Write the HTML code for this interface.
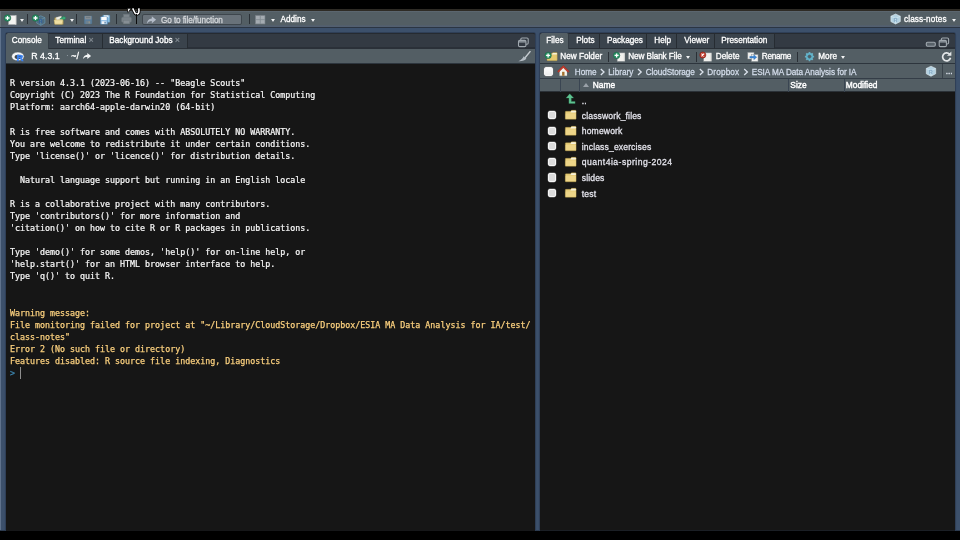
<!DOCTYPE html>
<html><head><meta charset="utf-8"><title>RStudio</title>
<style>
*{box-sizing:border-box;margin:0;padding:0}
html,body{width:960px;height:540px;overflow:hidden;background:#000}
body{position:relative;font-family:"Liberation Sans","DejaVu Sans",sans-serif;font-size:8.2px;color:#fff}
.abs{position:absolute}
svg{position:absolute;overflow:visible}
#wrap{left:-20px;top:-20px;width:1000px;height:580px;background:#000;filter:blur(0.4px)}
#app{left:20px;top:29px;width:960px;height:521.800px;background:#3c506b;clip-path:inset(-3px 0 0 0)}
#topstrip{left:0;top:0;width:960px;height:3.200px;background:linear-gradient(#2e2b25 0,#2e2b25 2.100px,#5c6770 2.100px,#58636b 3.200px)}
#maintb{left:0;top:0;width:960px;height:19px;background:linear-gradient(#535e64 0,#535e64 15.500px,#525f70 17px,#525f70 18px);border-bottom:1px solid #2b3543}
.pane{top:24px;height:498px;background:#161616;overflow:hidden}
#left{left:5.800px;width:528.900px;border-radius:2px 2px 0 0;box-shadow:0 0 0 1.100px #2f3f57}
#right{left:540.300px;width:414.900px;border-radius:2px 2px 0 0;box-shadow:0 0 0 1.100px #2f3f57}
.tabrow{left:0;top:0;right:0;height:16px;background:linear-gradient(#262b31 0,#262b31 1px,#333a43 1px,#333a43 14.500px,#2a3038 14.500px)}
.tab{top:1px;height:14.5px;line-height:13.600px;color:#fff;background:#3a434c;border-right:1px solid #262c32;border-bottom:1px solid #2a3037;white-space:nowrap;-webkit-text-stroke:0.3px #fff}
.tab.sel{background:#535e64;top:0;height:16px;line-height:15.600px;border-radius:2px 2px 0 0;border-right:1px solid #333b43;border-bottom:0}
.tab .x{color:#858d94;-webkit-text-stroke:0.2px #858d94;font-size:9px}
.tb2{left:0;right:0;top:15.5px;height:15.5px;background:#535e64;border-bottom:1px solid #2d353d}
.t{display:inline-block;transform:scaleY(1.1);transform-origin:0 77%}
.lbl.dn{transform-origin:0 27%}
.lbl{transform:scaleY(1.1);transform-origin:0 77%;white-space:nowrap;line-height:10px;color:#fff;-webkit-text-stroke:0.3px #fff}
.sep{width:1px;background:#2a3036;top:5px;height:10px}
.dd{width:0;height:0;margin-left:0.200px;border-left:2.200px solid transparent;border-right:2.200px solid transparent;border-top:3.300px solid #f2f4f5;filter:drop-shadow(0 0 0.4px #2e363c)}
#console{left:0;top:31px;right:0;bottom:0;background:#161616;font-family:"DejaVu Sans Mono","Liberation Mono",monospace;font-size:8.32px;line-height:12.08px;color:#f8f8f8;white-space:pre;-webkit-text-stroke:0.22px #f8f8f8}
#console .w{color:#fbd07e;-webkit-text-stroke:0.25px #fbd07e}
.bc{left:0;right:0;top:31px;height:15px;background:#535e64;border-bottom:1px solid #343d47}
.bc .lbl{color:#d3dcea;-webkit-text-stroke:0.25px #d3dcea;top:3.600px}
.hdr{left:0;right:0;top:46px;height:13px;background:#535e64;border-bottom:1px solid #2b3137}
.hdr .lbl{top:1.200px;-webkit-text-stroke:0.4px #fff;font-size:8.400px}
.hdr .sep{top:0;height:13px;background:#3a4552}
.cb{width:8.200px;height:8.200px;border-radius:2px;background:#dcdcdc;border:1.300px solid #f6f6f6;box-shadow:0 0 0 0.4px #777}
.row .lbl{color:#e6e6ee;-webkit-text-stroke:0.25px #e6e6ee;font-size:8.6px;letter-spacing:0.13px}
</style></head><body>
<div id="wrap" class="abs"><div id="app" class="abs">
 <div id="maintb" class="abs">
  <div id="topstrip" class="abs"></div>
  <div class="abs" style="left:142px;top:4.700px;width:100px;height:11.300px;background:#69727a;border:1px solid #3e464d;border-radius:2px"></div>
  
  <svg width="960" height="19" viewBox="0 0 960 19" style="left:0;top:0">
   <!-- new file -->
   <rect x="8.400" y="6.300" width="7.900" height="9.400" fill="#f4f4f2" stroke="#8d9498" stroke-width="0.5"/>
   <rect x="15.100" y="6.700" width="1" height="8.700" fill="#e4e4e1"/>
   <circle cx="7.500" cy="9" r="3.300" fill="#2b9467" stroke="#1b6445" stroke-width="0.6"/>
   <path d="M5.500 9h4" stroke="#fff" stroke-width="1.700"/><path d="M7.500 7v4" stroke="#fff" stroke-width="1.200"/>
   <!-- new project -->
   <path d="M40.800 6.800l4.100 1.900v5.400l-4.100 2.200l-4.100-2.200V8.700z" fill="#47789a" fill-opacity="0.5" stroke="#6a9db8" stroke-width="0.6"/>
   <path d="M36.700 8.700l4.100 1.900l4.100-1.900M40.800 10.600v5.700" stroke="#74a6c0" stroke-width="0.5" fill="none"/>
   <text x="38.800" y="14.200" font-family="Liberation Sans,sans-serif" font-weight="bold" font-size="5.200" fill="#2f5f9e">R</text>
   <circle cx="35.500" cy="9" r="3.300" fill="#2b9467" stroke="#1b6445" stroke-width="0.6"/>
   <path d="M33.500 9h4" stroke="#fff" stroke-width="1.700"/><path d="M35.500 7v4" stroke="#fff" stroke-width="1.200"/>
   <!-- open folder -->
   <path d="M54.800 8.800h2.800l0.900 0.900h4.700v5.500h-8.400z" fill="#d9c27a" stroke="#a08a45" stroke-width="0.4"/>
   <path d="M56 8.400l5.200-1.300l0.900 3.200l-5.600 1z" fill="#f3f1e6" stroke="#b9b9b2" stroke-width="0.3"/>
   <path d="M54 10.900h9l-0.800 4.300h-7.400z" fill="#efdfa2" stroke="#b5a05a" stroke-width="0.4"/>
   <path d="M59.800 10c0.900-1.300 2.100-1.700 3.400-1.700v-1.400l3 2.200l-3 2.200v-1.400c-1.200 0-2.300 0-3.400 0.100z" fill="#3fae7a" stroke="#1f7a52" stroke-width="0.4"/>
   <!-- save (disabled) -->
   <g opacity="0.62">
    <rect x="84.300" y="6.900" width="7.600" height="8" rx="0.600" fill="#5f93c0" stroke="#4f7da3" stroke-width="0.4"/>
    <rect x="84.900" y="7" width="6.400" height="3.400" fill="#a4abb1"/>
    <rect x="86" y="7.900" width="4.200" height="0.800" fill="#7d858b"/>
    <rect x="85.800" y="11.800" width="4.600" height="3" fill="#7f97aa"/>
    <rect x="88.600" y="12.400" width="1.200" height="1.900" fill="#c5b9a4"/>
   </g>
   <!-- save all -->
   <rect x="102.800" y="6.200" width="7" height="7" rx="0.500" fill="#8cc4e8" stroke="#5b8db8" stroke-width="0.4"/>
   <rect x="104" y="6.400" width="4.400" height="2.400" fill="#f4f7fa"/>
   <rect x="100.400" y="7.800" width="7.200" height="7.400" rx="0.500" fill="#7fb3df" stroke="#4f82ae" stroke-width="0.4"/>
   <rect x="101.300" y="8" width="5.400" height="3.200" fill="#fafbfc"/>
   <rect x="101.600" y="12.200" width="4.800" height="2.800" fill="#eef1f4"/>
   <rect x="104.500" y="12.700" width="1.200" height="1.900" fill="#3f74a3"/>
   <!-- printer (disabled) -->
   <g opacity="0.5">
    <rect x="123.600" y="5.300" width="5.800" height="3.400" fill="#a9b0b6" stroke="#8a9197" stroke-width="0.4"/>
    <rect x="121.600" y="8.200" width="9.800" height="5" rx="1.200" fill="#a2a9af" stroke="#868d93" stroke-width="0.4"/>
    <rect x="123.400" y="11.600" width="6.200" height="3.200" fill="#b9bfc4" stroke="#8a9197" stroke-width="0.4"/>
   </g>
   <!-- cursor fragment -->
   <path d="M127.600 -0.700h3.400l-2.400 3.900h-1z" fill="#fff" stroke="#000" stroke-width="0.8"/>
   <path d="M132.700 -0.600l1.500 3.100c0.600 1.700 1.400 2.600 2.500 2.600c1.500 0 2.300-1.500 2.300-3.300c0-0.900-0.100-1.600-0.400-2.400" fill="none" stroke="#000" stroke-width="3.200"/>
   <path d="M132.700 -0.600l1.500 3.100c0.600 1.700 1.400 2.600 2.500 2.600c1.500 0 2.300-1.500 2.300-3.300c0-0.900-0.100-1.600-0.400-2.400" fill="none" stroke="#fff" stroke-width="1.600"/>
   <!-- goto arrow -->
   <path d="M146.800 15c0.300-3.400 2.100-5.200 5-5.400v-2.300l4.300 3.500l-4.300 3.500v-2.300c-2.200-0.100-3.800 0.900-5 3z" fill="#b4bcc8"/>
   <!-- grid -->
   <rect x="255.200" y="6.200" width="10" height="9" fill="#838b92"/>
   <rect x="256" y="7" width="3.800" height="3.300" fill="#a4abb1"/><rect x="260.700" y="7" width="3.800" height="3.300" fill="#a4abb1"/>
   <rect x="256" y="11.100" width="3.800" height="3.300" fill="#a4abb1"/><rect x="260.700" y="11.100" width="3.800" height="3.300" fill="#a4abb1"/>
   <!-- project cube -->
   <path d="M895.600 5l4.700 2.200v5.400l-4.700 2.400l-4.700-2.400V7.200z" fill="#b4d2e2" stroke="#e3eef4" stroke-width="0.6"/>
   <path d="M890.900 7.200l4.700 2.200l4.700-2.200M895.600 9.400v5.600" stroke="#dceef6" stroke-width="0.5" fill="none"/>
   <text x="893.400" y="12.800" font-family="Liberation Sans,sans-serif" font-weight="bold" font-size="5.600" fill="#86abc6">R</text>
  </svg>

  <span class="lbl dn abs" style="left:161px;top:6.500px;color:#d5d8db;-webkit-text-stroke:0.25px #d5d8db;letter-spacing:-0.100px">Go to file/function</span>
  <span class="lbl dn abs" style="left:280.5px;top:6.400px">Addins</span>
  <span class="lbl dn abs" style="left:904px;top:6.400px;letter-spacing:0.120px">class-notes</span>
  <div class="sep abs" style="left:27px"></div>
  <div class="sep abs" style="left:48.5px"></div>
  <div class="sep abs" style="left:76px"></div>
  <div class="sep abs" style="left:115.5px"></div>
  <div class="sep abs" style="left:136px;background:#0c0c0c"></div>
  <div class="sep abs" style="left:248.5px"></div>
  <div class="dd abs" style="left:20px;top:9.5px"></div>
  <div class="dd abs" style="left:69.5px;top:9.5px"></div>
  <div class="dd abs" style="left:270.5px;top:9.5px"></div>
  <div class="dd abs" style="left:311px;top:9.5px"></div>
  <div class="dd abs" style="left:951.5px;top:9.5px"></div>
 </div>

 <div id="left" class="pane abs">
  <div class="tabrow abs">
   <div class="tab sel abs" style="left:0;width:43px;padding-left:6px"><span class="t">Console</span></div>
   <div class="tab abs" style="left:43px;width:54.5px;padding-left:6.5px"><span class="t">Terminal</span> <span class="x">×</span></div>
   <div class="tab abs" style="left:97.5px;width:84.5px;padding-left:6px"><span class="t">Background Jobs</span> <span class="x">×</span></div>
   
  </div>
  <div class="tb2 abs">
   <span class="lbl abs" style="left:25.5px;top:2.400px;font-size:8.8px">R 4.3.1</span>
   <span class="lbl abs" style="left:60.300px;top:2.400px;color:#9aa3ab;-webkit-text-stroke:0">·</span>
   <span class="lbl abs" style="left:65.5px;top:2.400px;font-size:8.8px">~/</span>
   
  </div>
<svg width="529" height="40" viewBox="0 0 529 40" style="left:0;top:0">
   <!-- window icon -->
   <rect x="514.800" y="5" width="7.400" height="6.200" rx="1.200" fill="none" stroke="#a0a8af" stroke-width="1.100"/>
   <rect x="512.500" y="7.400" width="7.400" height="6.200" rx="1.200" fill="#333a43" stroke="#a0a8af" stroke-width="1.100"/>
   <path d="M512.700 8.800h7" stroke="#a0a8af" stroke-width="1.300"/>
   <!-- R logo -->
   <ellipse cx="11.850" cy="23.450" rx="6.250" ry="4.350" fill="#f4f5f6" stroke="#485259" stroke-width="0.5"/>
   <ellipse cx="12.300" cy="23.900" rx="3.700" ry="2.100" fill="#3f484e"/>
   <text x="10.500" y="28.400" font-family="Liberation Sans,sans-serif" font-weight="bold" font-size="9.600" fill="#3a82f2" stroke="#3a82f2" stroke-width="0.5">R</text>
   <!-- arrow -->
   <path d="M77 26.200c0.300-2.900 1.800-4.300 4.300-4.500v-1.800l3.800 3l-3.800 3v-1.800c-1.900-0.100-3.300 0.500-4.300 2.100z" fill="#f2f4f5"/>
   <!-- broom -->
   <path d="M523.900 17.700l1.100 0.900l-5.400 6.600l-1.100-0.900z" fill="#c6ccd1"/>
   <path d="M517.600 23.300l2.800 2.300c-1.400 1.900-4 2.800-8 2.600c2.800-1.200 4.500-2.800 5.200-4.900z" fill="#b4bcc3"/>
  </svg>
<div id="console" class="abs"><div class="abs" style="left:4.2px;top:13.200px">R version 4.3.1 (2023-06-16) -- "Beagle Scouts"
Copyright (C) 2023 The R Foundation for Statistical Computing
Platform: aarch64-apple-darwin20 (64-bit)

R is free software and comes with ABSOLUTELY NO WARRANTY.
You are welcome to redistribute it under certain conditions.
Type 'license()' or 'licence()' for distribution details.

  Natural language support but running in an English locale

R is a collaborative project with many contributors.
Type 'contributors()' for more information and
'citation()' on how to cite R or R packages in publications.

Type 'demo()' for some demos, 'help()' for on-line help, or
'help.start()' for an HTML browser interface to help.
Type 'q()' to quit R.


<span class="w">Warning message:
File monitoring failed for project at "~/Library/CloudStorage/Dropbox/ESIA MA Data Analysis for IA/test/
class-notes"
Error 2 (No such file or directory)
Features disabled: R source file indexing, Diagnostics</span>
<span style="color:#3d86b0;-webkit-text-stroke:0.2px #3d86b0">&gt;</span></div><div class="abs" style="left:13.900px;top:302.500px;width:1.200px;height:12.200px;background:#8d8d8d"></div></div>
 </div>

 <div id="right" class="pane abs">
  <div class="tabrow abs">
   <div class="tab sel abs" style="left:0;width:29px;padding-left:6px"><span class="t">Files</span></div>
   <div class="tab abs" style="left:29px;width:31px;padding-left:7px"><span class="t">Plots</span></div>
   <div class="tab abs" style="left:60px;width:47px;padding-left:6.700px"><span class="t">Packages</span></div>
   <div class="tab abs" style="left:107px;width:30px;padding-left:7px"><span class="t">Help</span></div>
   <div class="tab abs" style="left:137px;width:38px;padding-left:7px"><span class="t">Viewer</span></div>
   <div class="tab abs" style="left:175px;width:60px;padding-left:6px"><span class="t">Presentation</span></div>
   
  </div>
  <div class="tb2 abs">
   <span class="lbl dn abs" style="left:20px;top:3.800px">New Folder</span>
   <div class="sep abs" style="left:68px;top:3px"></div>
   <span class="lbl dn abs" style="left:88px;top:3.800px;letter-spacing:-0.090px">New Blank File</span>
   <div class="dd abs" style="left:145.5px;top:7px"></div>
   <div class="sep abs" style="left:156px;top:3px"></div>
   <span class="lbl dn abs" style="left:175.5px;top:3.800px">Delete</span>
   <span class="lbl dn abs" style="left:221.5px;top:3.800px;letter-spacing:-0.300px">Rename</span>
   <div class="sep abs" style="left:257px;top:3px"></div>
   <span class="lbl dn abs" style="left:278px;top:3.800px">More</span>
   <div class="dd abs" style="left:301px;top:7px"></div>
   
  </div>
  <div class="bc abs">
   <div class="cb abs" style="left:3.800px;top:2.600px;width:9.400px;height:9.400px;background:linear-gradient(#fdfdfd,#ececec)"></div>
   <span class="lbl abs" style="left:34.5px">Home</span>
   <span class="lbl abs" style="left:68px">Library</span>
   <span class="lbl abs" style="left:105.5px;letter-spacing:-0.100px">CloudStorage</span>
   <span class="lbl abs" style="left:167px;letter-spacing:0.150px">Dropbox</span>
   <span class="lbl abs" style="left:211.5px;letter-spacing:-0.050px">ESIA MA Data Analysis for IA</span>
   <div class="sep abs" style="left:401.5px;top:0;height:14px;background:#39424a"></div>
   <span class="lbl abs" style="left:405.5px;top:2.500px;color:#fff">...</span>
   
  </div>
  <div class="hdr abs">
   <div class="sep abs" style="left:20px"></div>
   <div class="sep abs" style="left:39px"></div>
   <div class="sep abs" style="left:248px"></div>
   <div class="sep abs" style="left:304px"></div>
   <div class="abs" style="left:43px;top:4px;width:0;height:0;border-left:3px solid transparent;border-right:3px solid transparent;border-bottom:4.500px solid #9aa1a8"></div>
   <span class="lbl abs" style="left:52.5px">Name</span>
   <span class="lbl abs" style="left:250px">Size</span>
   <span class="lbl abs" style="left:305.5px">Modified</span>
  </div>
  <div id="files" class="abs" style="left:0;top:59px;right:0;bottom:0">
   <div class="row abs" style="top:0"><span class="lbl abs" style="left:41.5px;top:4px">..</span></div>
   <div class="row abs" style="top:15.6px"><div class="cb abs" style="left:8px;top:3.400px"></div><span class="lbl abs" style="left:41.5px;top:3px">classwork_files</span></div>
   <div class="row abs" style="top:31.2px"><div class="cb abs" style="left:8px;top:3.400px"></div><span class="lbl abs" style="left:41.5px;top:3px">homework</span></div>
   <div class="row abs" style="top:46.8px"><div class="cb abs" style="left:8px;top:3.400px"></div><span class="lbl abs" style="left:41.5px;top:3px">inclass_exercises</span></div>
   <div class="row abs" style="top:62.4px"><div class="cb abs" style="left:8px;top:3.400px"></div><span class="lbl abs" style="left:41.5px;top:3px;letter-spacing:0.480px">quant4ia-spring-2024</span></div>
   <div class="row abs" style="top:78px"><div class="cb abs" style="left:8px;top:3.400px"></div><span class="lbl abs" style="left:41.5px;top:3px">slides</span></div>
   <div class="row abs" style="top:93.6px"><div class="cb abs" style="left:8px;top:3.400px"></div><span class="lbl abs" style="left:41.5px;top:3px">test</span></div>
   
  </div>
<svg width="415" height="200" viewBox="0 0 415 200" style="left:0;top:0">
   <!-- min / max -->
   <rect x="386.300" y="9.300" width="9" height="4" rx="1.200" fill="#59626a" stroke="#a0a8af" stroke-width="1.100"/>
   <rect x="401.400" y="5" width="7.200" height="6" rx="1.200" fill="none" stroke="#a0a8af" stroke-width="1.100"/>
   <rect x="399.200" y="7.400" width="7.200" height="6.200" rx="1.200" fill="#333a43" stroke="#a0a8af" stroke-width="1.100"/>
   <path d="M399.400 8.800h6.800" stroke="#a0a8af" stroke-width="1.300"/>
   <!-- new folder -->
   <path d="M7 21.200q0-0.600 0.600-0.600h4.200l1.200-1.100h3.600q0.600 0 0.600 0.600v7q0 0.600-0.600 0.600h-9q-0.600 0-0.600-0.600z" fill="#e4c96f" stroke="#a98f3c" stroke-width="0.4"/>
   <path d="M12.800 19.900h3.700q0.400 0 0.400 0.400v1.200h-5z" fill="#f6f1dc"/>
   <circle cx="8.1" cy="22.4" r="3.2" fill="#2b9467" stroke="#1b6445" stroke-width="0.6"/><path d="M6.100 22.400h4" stroke="#fff" stroke-width="1.400"/><path d="M8.100 20.400v4" stroke="#fff" stroke-width="1.300"/>
   <!-- new blank file -->
   <rect x="77.200" y="19.900" width="7.600" height="8.400" fill="#f1f1ee" stroke="#8d9498" stroke-width="0.5"/>
   <rect x="83.600" y="20.200" width="1" height="7.800" fill="#e2e2df"/>
   <circle cx="76.6" cy="22.4" r="3.2" fill="#2b9467" stroke="#1b6445" stroke-width="0.6"/><path d="M74.600 22.400h4" stroke="#fff" stroke-width="1.400"/><path d="M76.600 20.400v4" stroke="#fff" stroke-width="1.300"/>
   <!-- delete -->
   <rect x="163.700" y="19.900" width="7.800" height="8.400" fill="#f1f1ee" stroke="#8d9498" stroke-width="0.5"/>
   <rect x="170.300" y="20.200" width="1" height="7.800" fill="#e2e2df"/>
   <circle cx="162.800" cy="22" r="3.100" fill="#c0392b" stroke="#7e1f15" stroke-width="0.6"/>
   <path d="M161.500 20.700l2.600 2.600M164.100 20.700l-2.600 2.600" stroke="#fff" stroke-width="1.100"/>
   <!-- rename -->
   <rect x="207.800" y="19.400" width="6.200" height="6.600" fill="#f1f1ee" stroke="#8d9498" stroke-width="0.5"/>
   <rect x="211.600" y="21.600" width="6.400" height="6.800" fill="#f4f4f2" stroke="#8d9498" stroke-width="0.5"/>
   <path d="M209.800 23.300h4v-1.600l3 2.500l-3 2.500v-1.600h-4z" fill="#3b86d6" stroke="#2a62a0" stroke-width="0.3"/>
   <!-- gear -->
   <g transform="translate(269.500,23.600)">
    <g fill="#6aafc2" transform="scale(0.92)">
     <rect x="-1" y="-5" width="2" height="10" rx="0.400"/>
     <rect x="-1" y="-5" width="2" height="10" rx="0.400" transform="rotate(45)"/>
     <rect x="-1" y="-5" width="2" height="10" rx="0.400" transform="rotate(90)"/>
     <rect x="-1" y="-5" width="2" height="10" rx="0.400" transform="rotate(135)"/>
    </g>
    <circle r="3.500" fill="#63b4cc"/><circle r="1.800" fill="#535e64" stroke="#3f8198" stroke-width="0.4"/>
   </g>
   <!-- refresh -->
   <path d="M409.600 21.200a4 4 0 1 0 0.900 3.600" fill="none" stroke="#e3e6e8" stroke-width="1.700"/>
   <path d="M411.400 18.400v4.400h-4.400z" fill="#e3e6e8"/>
   <!-- home -->
   <path d="M19.600 37.400l3.700-3.400l3.700 3.400v5.400h-7.400z" fill="#f6f4ee" stroke="#b5b1a6" stroke-width="0.3"/>
   <path d="M17.400 38.300l5.900-5.800l5.900 5.800l-1.100 1.100l-4.800-4.600l-4.800 4.600z" fill="#c23a2b" stroke="#8c2318" stroke-width="0.3"/>
   <rect x="22.100" y="38.800" width="2.400" height="4" fill="#a4702e"/>
   <!-- chevrons -->
   <g fill="none" stroke="#dbe2ec" stroke-width="1.300">
    <path d="M60.800 36l3.200 3l-3.200 3"/><path d="M98 36l3.200 3l-3.200 3"/><path d="M159.800 36l3.200 3l-3.200 3"/><path d="M204.200 36l3.200 3l-3.200 3"/>
   </g>
   <!-- project cube -->
   <path d="M391 33.200l4.700 2.200v5.400l-4.700 2.400l-4.700-2.400v-5.400z" fill="#b4d2e2" stroke="#e3eef4" stroke-width="0.6"/>
   <path d="M386.300 35.400l4.700 2.200l4.700-2.200M391 37.600v5.600" stroke="#dceef6" stroke-width="0.5" fill="none"/>
   <text x="388.800" y="41" font-family="Liberation Sans,sans-serif" font-weight="bold" font-size="5.600" fill="#86abc6">R</text>
   <!-- up arrow -->
   <path d="M29.700 60.800l4 4.300h-2.400v3.400h3.800v2h-6.200v-5.400h-2.800z" fill="#5fc291" stroke="#2f8c5d" stroke-width="0.3"/>
   <path d="M25.3 78.9q0-0.600 0.600-0.600h4.600l1.200-1h3.800q0.600 0 0.600 0.600v7.800q0 0.600-0.600 0.600h-9.600q-0.600 0-0.600-0.600z" fill="#e6cc79" stroke="#a98f3c" stroke-width="0.4"/><path d="M31.4 77.8h4q0.400 0 0.400 0.400v1.300h-5.400z" fill="#f6f1dc"/><path d="M25.6 80.6h10.300v5.200h-10.300z" fill="#efd98f" fill-opacity="0.7"/><path d="M25.3 94.9q0-0.600 0.600-0.600h4.600l1.200-1h3.800q0.600 0 0.600 0.600v7.800q0 0.600-0.600 0.600h-9.600q-0.600 0-0.600-0.600z" fill="#e6cc79" stroke="#a98f3c" stroke-width="0.4"/><path d="M31.4 93.8h4q0.400 0 0.400 0.400v1.300h-5.400z" fill="#f6f1dc"/><path d="M25.6 96.6h10.300v5.200h-10.300z" fill="#efd98f" fill-opacity="0.7"/><path d="M25.3 110.4q0-0.600 0.600-0.600h4.600l1.200-1h3.800q0.600 0 0.600 0.600v7.800q0 0.600-0.600 0.600h-9.600q-0.600 0-0.600-0.600z" fill="#e6cc79" stroke="#a98f3c" stroke-width="0.4"/><path d="M31.4 109.3h4q0.400 0 0.400 0.400v1.300h-5.400z" fill="#f6f1dc"/><path d="M25.6 112.1h10.300v5.200h-10.300z" fill="#efd98f" fill-opacity="0.7"/><path d="M25.3 125.9q0-0.600 0.600-0.600h4.600l1.200-1h3.800q0.600 0 0.600 0.600v7.800q0 0.600-0.600 0.600h-9.600q-0.600 0-0.600-0.600z" fill="#e6cc79" stroke="#a98f3c" stroke-width="0.4"/><path d="M31.4 124.8h4q0.400 0 0.400 0.400v1.300h-5.400z" fill="#f6f1dc"/><path d="M25.6 127.6h10.300v5.200h-10.300z" fill="#efd98f" fill-opacity="0.7"/><path d="M25.3 141.4q0-0.600 0.600-0.600h4.600l1.200-1h3.800q0.600 0 0.600 0.600v7.800q0 0.600-0.600 0.600h-9.600q-0.600 0-0.600-0.600z" fill="#e6cc79" stroke="#a98f3c" stroke-width="0.4"/><path d="M31.4 140.3h4q0.400 0 0.400 0.400v1.300h-5.400z" fill="#f6f1dc"/><path d="M25.6 143.1h10.300v5.200h-10.300z" fill="#efd98f" fill-opacity="0.7"/><path d="M25.3 156.9q0-0.600 0.600-0.600h4.600l1.200-1h3.800q0.600 0 0.600 0.600v7.800q0 0.600-0.600 0.600h-9.600q-0.600 0-0.600-0.600z" fill="#e6cc79" stroke="#a98f3c" stroke-width="0.4"/><path d="M31.4 155.8h4q0.400 0 0.400 0.400v1.300h-5.400z" fill="#f6f1dc"/><path d="M25.6 158.6h10.300v5.200h-10.300z" fill="#efd98f" fill-opacity="0.7"/>
  </svg>
 </div>
 <div class="abs" style="left:0;top:19px;width:1.300px;height:502px;background:#5f728c"></div><div class="abs" style="left:0;top:2px;width:1.300px;height:16px;background:#6a757c"></div>
</div></div>
</body></html>
